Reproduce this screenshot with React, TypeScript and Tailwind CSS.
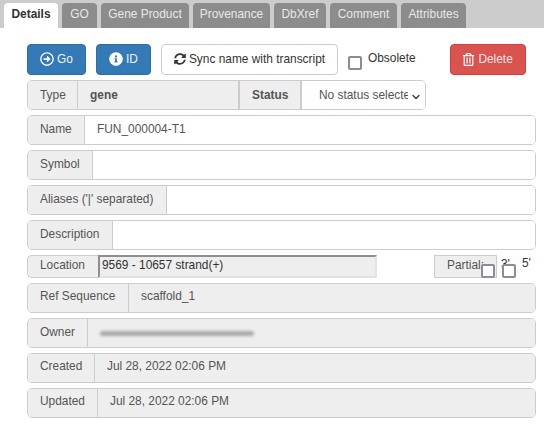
import { FaInfoCircle, FaRegArrowAltCircleRight, FaRegTrashAlt, FaSyncAlt } from "react-icons/fa";
import { ChevronDown } from "lucide-react";

const tabs = [
  { label: "GO", width: "w-[35px]" },
  { label: "Gene Product", width: "w-[88px]" },
  { label: "Provenance", width: "w-[77px]" },
  { label: "DbXref", width: "w-[52px]" },
  { label: "Comment", width: "w-[67px]" },
  { label: "Attributes", width: "w-[65px]" },
];

interface RowProps {
  label: string;
  labelWidth: string;
  value?: string;
  valuePad?: string;
  readOnly?: boolean;
}

const Row = ({ label, labelWidth, value, valuePad, readOnly }: RowProps) => (
  <div className="flex h-[30px] rounded-[5px] border border-[#ccc] overflow-hidden">
    <div className={`${labelWidth} shrink-0 flex items-center pl-[12px] bg-[#eee] border-r border-[#ccc] text-[#555] ${readOnly ? "pb-[3px]" : "pb-[1px]"}`}>
      {label}
    </div>
    <div className={`flex-1 flex items-center text-[#555] ${valuePad ?? ""} ${readOnly ? "bg-[#eee] pb-[3px]" : "bg-white pb-[1px]"}`}>
      {value}
    </div>
  </div>
);

const Check = ({ className }: { className?: string }) => (
  <span className={`block w-[14px] h-[14px] rounded-[2px] border-2 border-[#8b8b99] bg-white shrink-0 ${className ?? ""}`} />
);

export default function App() {
  return (
    <div className="w-[544px] h-[424px] bg-white overflow-hidden text-[11.9px] leading-[17px] font-['Liberation_Sans',Arial,sans-serif]">
      <div className="h-[28px] bg-[#ccc] flex items-end gap-[4px] pl-[4px]">
        <div className="w-[54px] h-[25px] rounded-t-[4px] bg-white text-[#333] font-bold flex items-center justify-center pb-[3px]">
          Details
        </div>
        {tabs.map((t) => (
          <div key={t.label} className={`${t.width} h-[25px] rounded-t-[4px] bg-[#8c8c8c] text-[#e8e8e8] flex items-center justify-center pb-[3px]`}>
            {t.label}
          </div>
        ))}
      </div>

      <div className="pl-[27px] pr-[8px] pt-[16px]">
        <div className="flex items-start h-[31px]">
          <div className="w-[59px] h-[31px] rounded-[4px] bg-[#337ab7] border border-[#2e6da4] text-[#f2f2f2] flex items-center justify-center gap-[3px] pb-[1px]">
            <FaRegArrowAltCircleRight className="text-white text-[14px]" />
            <span>Go</span>
          </div>
          <div className="ml-[10px] w-[55px] h-[31px] rounded-[4px] bg-[#337ab7] border border-[#2e6da4] text-[#f2f2f2] flex items-center justify-center gap-[3px] pb-[1px]">
            <FaInfoCircle className="text-white text-[14px]" />
            <span>ID</span>
          </div>
          <div className="ml-[10px] w-[177px] h-[31px] rounded-[4px] bg-white border border-[#ccc] text-[#333] flex items-center justify-center gap-[3px] pb-[1px]">
            <FaSyncAlt className="text-[12px]" />
            <span>Sync name with transcript</span>
          </div>
          <Check className="ml-[10px] mt-[12px]" />
          <span className="ml-[6px] mt-[6px] text-[#333]">Obsolete</span>
          <div className="ml-[34px] w-[76px] h-[31px] rounded-[4px] bg-[#d9534f] border border-[#d43f3a] text-[#f6e3e2] flex items-center justify-center gap-[3px] pb-[1px]">
            <FaRegTrashAlt className="text-white text-[13px]" />
            <span>Delete</span>
          </div>
        </div>

        <div className="mt-[5px] flex flex-col gap-[5px]">
          <div className="flex h-[30px] w-[399px] rounded-[5px] border border-[#ccc] overflow-hidden">
            <div className="w-[50px] shrink-0 flex items-center pl-[12px] bg-[#eee] border-r border-[#ccc] text-[#555]">Type</div>
            <div className="w-[162px] shrink-0 flex items-center pl-[12px] bg-[#eee] border-r-2 border-[#ccc] text-[#555] font-bold">gene</div>
            <div className="w-[62px] shrink-0 flex items-center pl-[12px] bg-[#eee] border-r-2 border-[#ccc] text-[#555] font-bold">Status</div>
            <div className="flex-1 flex items-center bg-white text-[#555]">
              <span className="ml-[17px] w-[89px] overflow-hidden whitespace-nowrap">No status selected</span>
              <ChevronDown className="ml-[2px] mt-[4px] w-[12px] h-[12px] text-[#333]" strokeWidth={2.5} />
            </div>
          </div>

          <Row label="Name" labelWidth="w-[57px]" value="FUN_000004-T1" valuePad="pl-[12px]" />
          <Row label="Symbol" labelWidth="w-[65px]" />
          <Row label="Aliases ('|' separated)" labelWidth="w-[139px]" />
          <Row label="Description" labelWidth="w-[85px]" />

          <div className="flex h-[23px] relative">
            <div className="w-[71px] shrink-0 flex items-center pl-[12px] bg-[#eee] border border-[#ccc] border-r-0 rounded-l-[5px] text-[#555] pb-[3px]">
              Location
            </div>
            <div className="w-[279px] shrink-0 flex items-center pl-[2px] bg-[#eee] border-2 border-[#e3e3e3] border-t-[#8e8e8e] border-l-[#8e8e8e] text-[#333] pb-[2px]">
              9569 - 10657 strand(+)
            </div>
            <div className="ml-[57px] w-[63px] shrink-0 flex items-center pl-[12px] bg-[#eee] border border-[#ccc] text-[#555] pb-[3px]">
              Partial:
            </div>
            <Check className="-ml-[16px] mt-[9px] relative" />
            <span className="ml-[6px] mt-[1px] text-[#333] relative z-0">3'</span>
            <Check className="-ml-[8px] mt-[9px] relative" />
            <span className="ml-[6px] text-[#333]">5'</span>
          </div>

          <Row label="Ref Sequence" labelWidth="w-[101px]" value="scaffold_1" valuePad="pl-[12px]" readOnly />
          <div className="flex h-[30px] rounded-[5px] border border-[#ccc] overflow-hidden">
            <div className="w-[60px] shrink-0 flex items-center pl-[12px] bg-[#eee] border-r border-[#ccc] text-[#555] pb-[1px]">Owner</div>
            <div className="flex-1 flex items-center bg-[#eee] pl-[12px]">
              <div className="w-[154px] h-[5px] bg-[#a8a8a8] rounded-full blur-[1.5px]" />
            </div>
          </div>
          <Row label="Created" labelWidth="w-[67px]" value="Jul 28, 2022 02:06 PM" valuePad="pl-[12px]" readOnly />
          <Row label="Updated" labelWidth="w-[70px]" value="Jul 28, 2022 02:06 PM" valuePad="pl-[12px]" readOnly />
        </div>
      </div>
    </div>
  );
}
